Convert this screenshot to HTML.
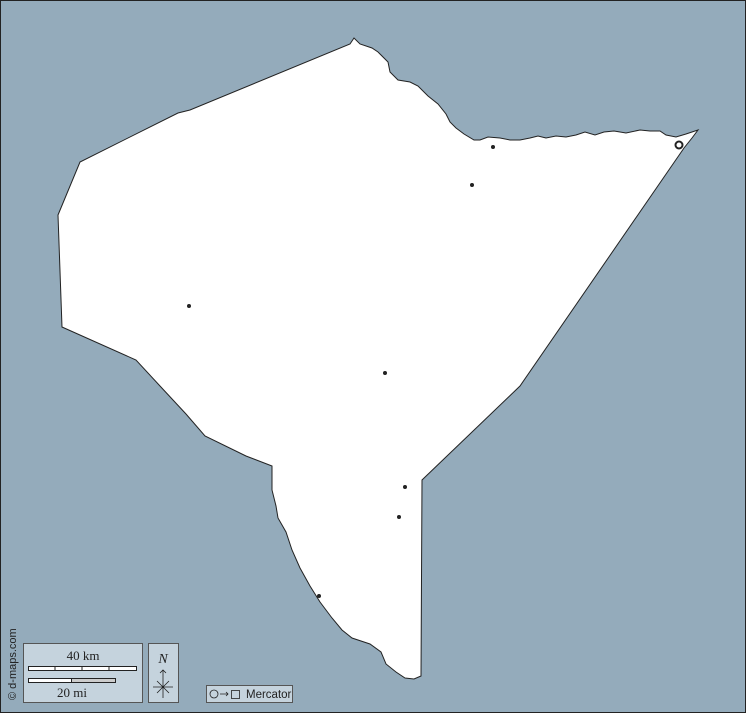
<!DOCTYPE html>
<html><head><style>
html,body{margin:0;padding:0;}
body{width:746px;height:713px;overflow:hidden;background:#94abbb;font-family:"Liberation Sans",sans-serif;}
</style></head><body>
<svg width="746" height="713" viewBox="0 0 746 713" xmlns="http://www.w3.org/2000/svg" style="position:absolute;left:0;top:0">
<rect x="0.5" y="0.5" width="745" height="712" fill="#94abbb" stroke="#222" stroke-width="1"/>
<path d="M350,44 L354,38 L360,44 L372,48 L378,52 L388,62 L390,72 L398,80 L410,82 L418,86 L428,96 L438,104 L446,114 L450,122 L456,128 L464,134 L474,140 L480,140 L488,137 L500,138 L510,140 L520,140 L530,138 L538,136 L546,138 L556,136 L566,137 L576,135 L585,132 L595,135 L604,132 L614,131 L626,133 L640,130 L650,131 L660,131 L666,135 L676,137 L686,134 L698,130 L692,138 L684,148 L520,386 L422,480 L421,676 L414,679 L405,678 L396,672 L386,664 L381,652 L370,644 L352,638 L342,630 L332,618 L320,602 L310,586 L300,568 L292,550 L286,532 L278,518 L276,506 L272,490 L272,466 L246,456 L205,436 L186,414 L160,386 L136,360 L62,327 L58,215 L80,162 L178,113 L190,110 Z" fill="#fff" stroke="#222" stroke-width="1"/>
<g fill="#222">
<circle cx="493" cy="147" r="2"/><circle cx="472" cy="185" r="2"/><circle cx="189" cy="306" r="2"/>
<circle cx="385" cy="373" r="2"/><circle cx="405" cy="487" r="2"/><circle cx="399" cy="517" r="2"/><circle cx="319" cy="596" r="2"/>
</g>
<circle cx="679" cy="145" r="3.5" fill="none" stroke="#222" stroke-width="2"/>
<rect x="23.5" y="643.5" width="119" height="59" fill="#c5d3dd" stroke="#555"/>
<text x="83" y="660" font-family="Liberation Serif" font-size="13" text-anchor="middle" fill="#222">40 km</text>
<rect x="28.5" y="666.5" width="108" height="4" fill="#fff" stroke="#222"/>
<path d="M55,666v5M82,666v5M109,666v5" stroke="#222"/>
<rect x="28.5" y="678.5" width="87" height="4" fill="#ccc" stroke="#222"/>
<rect x="28.5" y="678.5" width="43" height="4" fill="#fff" stroke="#222"/>
<text x="72" y="697" font-family="Liberation Serif" font-size="13" text-anchor="middle" fill="#222">20 mi</text>
<rect x="148.5" y="643.5" width="30" height="59" fill="#c5d3dd" stroke="#555"/>
<text x="163" y="663" font-family="Liberation Serif" font-style="italic" font-size="14" text-anchor="middle" fill="#222">N</text>
<path d="M163,670v28M153,687h20M157,681l12,12M169,681l-12,12M160,673l3,-3l3,3" stroke="#222" fill="none" stroke-width="0.8"/>
<rect x="206.5" y="685.5" width="86" height="17" fill="#c5d3dd" stroke="#555"/>
<circle cx="214" cy="694" r="4" fill="none" stroke="#222" stroke-width="0.8"/>
<path d="M220,694h8M226,692l2,2l-2,2" stroke="#222" fill="none" stroke-width="0.8"/>
<rect x="231.5" y="690.5" width="8" height="8" fill="none" stroke="#222" stroke-width="0.8"/>
<text x="246" y="698" font-size="11.5" fill="#222">Mercator</text>
<text x="16" y="700" font-size="11" fill="#222" transform="rotate(-90 16 700)">© d-maps.com</text>
</svg>
</body></html>
